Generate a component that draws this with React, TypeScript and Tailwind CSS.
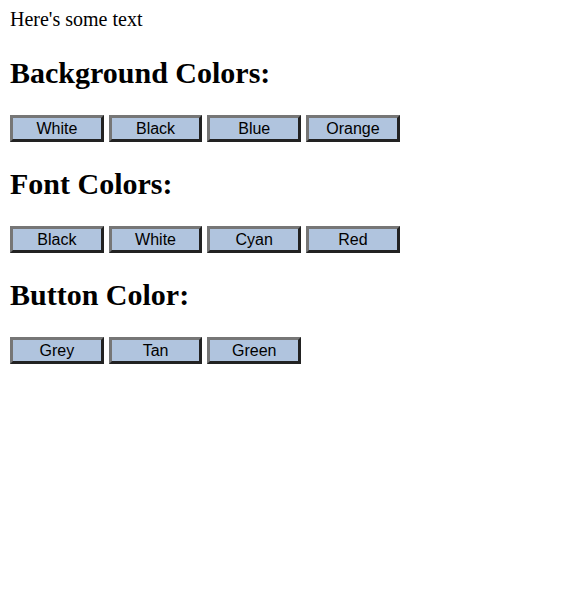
const groups: { title: string; items: string[] }[] = [
  { title: "Background Colors:", items: ["White", "Black", "Blue", "Orange"] },
  { title: "Font Colors:", items: ["Black", "White", "Cyan", "Red"] },
  { title: "Button Color:", items: ["Grey", "Tan", "Green"] },
];

function ColorButton({ label }: { label: string }) {
  return (
    <button
      type="button"
      className="w-[93.7px] h-[27px] bg-[#b0c4de] border-[3px] border-t-[#767676] border-l-[#767676] border-b-[#222222] border-r-[#222222] text-[16px] leading-none text-black font-['Liberation_Sans',Arial,sans-serif]"
    >
      {label}
    </button>
  );
}

export default function App() {
  return (
    <div className="min-h-[607px] bg-white pt-[8px] pl-[10px] text-black font-['Liberation_Serif','Times_New_Roman',serif]">
      <p className="text-[20px] leading-[23px]">Here's some text</p>
      {groups.map((g) => (
        <section key={g.title}>
          <h2 className="my-[25px] text-[30px] leading-[34px] font-bold">{g.title}</h2>
          <div className="flex gap-[5px]">
            {g.items.map((item) => (
              <ColorButton key={item} label={item} />
            ))}
          </div>
        </section>
      ))}
    </div>
  );
}
